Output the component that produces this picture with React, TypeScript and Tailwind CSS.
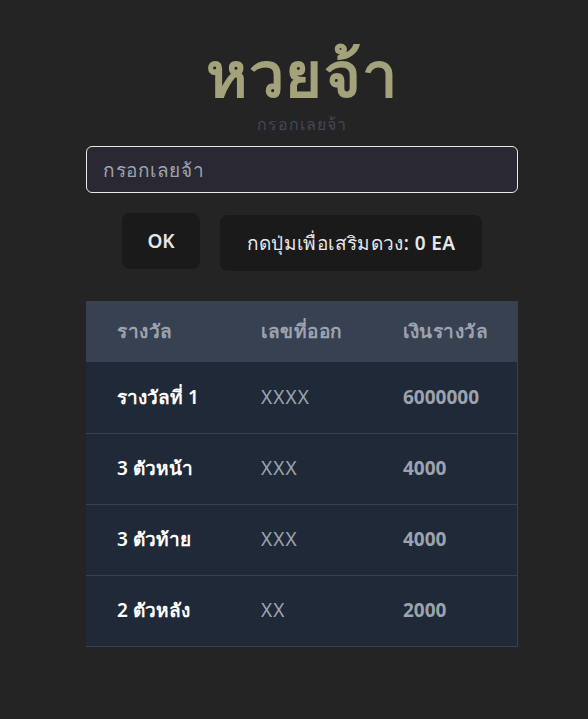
import React from 'react';

const rows = [
  { name: 'รางวัลที่ 1', num: 'XXXX', prize: '6000000' },
  { name: '3 ตัวหน้า', num: 'XXX', prize: '4000' },
  { name: '3 ตัวท้าย', num: 'XXX', prize: '4000' },
  { name: '2 ตัวหลัง', num: 'XX', prize: '2000' },
];

const App: React.FC = () => {
  return (
    <div
      className="min-h-[719px] bg-[#242424] flex flex-col items-center pt-[43px] pl-[16px]"
      style={{ fontFamily: '"Noto Sans", "Open Sans", sans-serif' }}
    >
      <h1 className="text-[63px] leading-[60px] font-bold text-[#a3a27a] tracking-[0.02em]">หวยจ้า</h1>
      <p className="mt-[13px] text-[16px] leading-[16px] text-[#414857] tracking-[0.06em]">กรอกเลยจ้า</p>

      <input
        type="text"
        placeholder="กรอกเลยจ้า"
        className="mt-[14px] w-[432px] h-[47px] rounded-md border border-[#e5e7eb] bg-[#2a2833] px-4 text-[19px] tracking-[0.03em] text-white placeholder:text-[#9ca3af] outline-none"
      />

      <div className="flex items-start gap-5 mt-5">
        <button className="w-[78px] h-[56px] rounded-lg bg-[#1a1a1a] text-[19px] font-semibold text-[#e5e7eb]">
          OK
        </button>
        <button className="mt-[2px] w-[262px] h-[56px] rounded-lg bg-[#1a1a1a] text-[19px] font-medium tracking-[0.02em] text-[#e5e7eb]">
          กดปุ่มเพื่อเสริมดวง: <span className="font-semibold">0 EA</span>
        </button>
      </div>

      <table className="mt-[30px] w-[432px] text-left border-r border-[#374151]">
        <thead className="bg-[#374151]">
          <tr className="h-[61px] text-[19px] text-[#9ca3af] tracking-[0.03em]">
            <th className="pl-[31px] w-[144px] font-semibold">รางวัล</th>
            <th className="pl-[31px] w-[142px] font-semibold">เลขที่ออก</th>
            <th className="pl-[31px] font-semibold">เงินรางวัล</th>
          </tr>
        </thead>
        <tbody>
          {rows.map((r) => (
            <tr key={r.name} className="h-[71px] bg-[#1f2937] border-b border-[#374151] text-[19px]">
              <td className="pl-[31px] font-semibold text-white">{r.name}</td>
              <td className="pl-[31px] text-[#9ca3af] tracking-[0.06em]">{r.num}</td>
              <td className="pl-[31px] font-bold text-[#9ca3af]">{r.prize}</td>
            </tr>
          ))}
        </tbody>
      </table>
    </div>
  );
};

export default App;
